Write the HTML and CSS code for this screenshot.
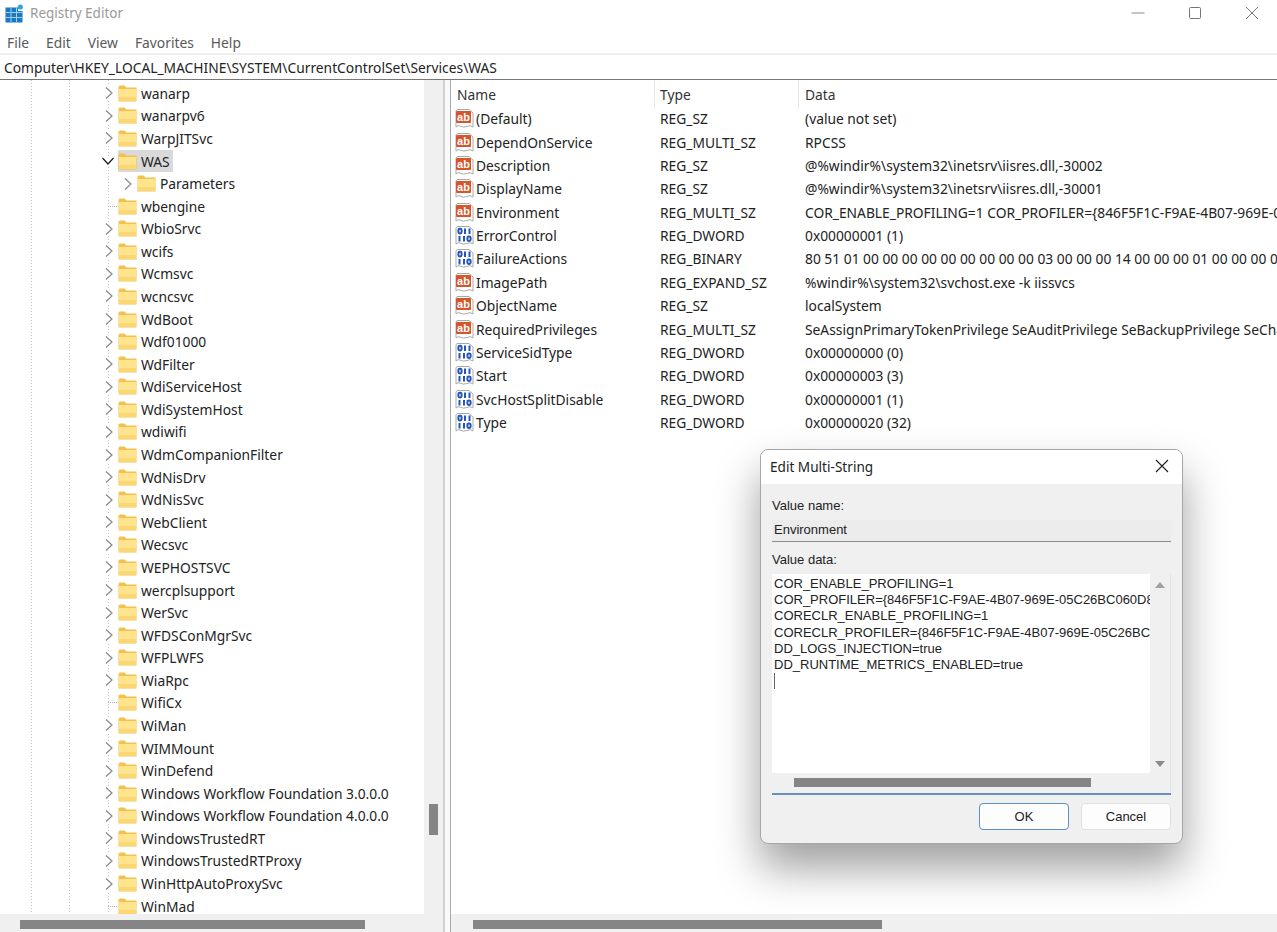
FILE: index.html
```html
<!DOCTYPE html>
<html lang="en">
<head>
    <meta charset="UTF-8">
    <title>Registry Editor</title>
    <link rel="stylesheet" href="styles.css">
</head>
<body>
    <!-- shared icons -->
    <svg class="defs" width="0" height="0">
        <symbol id="folder" viewBox="0 0 19 17">
            <path d="M0.5 2 Q0.5 0.5 2 0.5 H6.5 L8.5 2.5 H18.5 V16.5 H0.5 Z" fill="#f2c14e"/>
            <rect x="1" y="4" width="17" height="12" fill="#fde48d"/>
            <rect x="1" y="12" width="17" height="4" fill="#fbd774"/>
        </symbol>
        <symbol id="chev-right" viewBox="0 0 10 14"><path d="M2 1.5 L8 7 L2 12.5" fill="none" stroke="#888" stroke-width="1.2"/></symbol>
        <symbol id="chev-down" viewBox="0 0 14 10"><path d="M1.5 2 L7 8 L12.5 2" fill="none" stroke="#222" stroke-width="1.3"/></symbol>
        <symbol id="val-str" viewBox="0 0 19 19">
            <path d="M2 0.5 H14 L18 4 V18 Q15 15.5 12 17.5 Q8 19 5 17 Q3 16 1 18 V2 Z" fill="#fff" stroke="#aaa"/>
            <rect x="1" y="2" width="15" height="12" rx="1" fill="#d8552b"/>
            <text x="8.5" y="11.5" class="val-ab">ab</text>
        </symbol>
        <symbol id="val-bin" viewBox="0 0 19 19">
            <path d="M2 0.5 H14 L18 4 V18 Q15 15.5 12 17.5 Q8 19 5 17 Q3 16 1 18 V2 Z" fill="#fff" stroke="#aaa"/>
            <g fill="none" stroke="#2456b8" stroke-width="2">
                <rect x="3.4" y="2.8" width="3.2" height="4.6" rx="1.4"/>
                <path d="M10 2.5 V8 M14.5 2.5 V8 M4.5 10 V15.5 M9 10 V15.5"/>
                <rect x="12.4" y="10.4" width="3.2" height="4.6" rx="1.4"/>
            </g>
        </symbol>
    </svg>

    <div class="window">
        <div class="titlebar">
            <svg class="app-icon" width="19" height="19" viewBox="0 0 19 19">
                <path d="M0.5 3.5 H13 V7 H17.5 V18.5 H0.5 Z" fill="#1b79c4"/>
                <path d="M1 8.5 H17 M1 13.5 H17 M6 4 V18 M11.5 4 V18" stroke="#9fd0f0" stroke-width="1"/>
                <circle cx="15.3" cy="3" r="2.6" fill="#2fa3dc"/>
            </svg>
            <span class="app-title">Registry Editor</span>
            <div class="win-controls">
                <svg width="14" height="14" viewBox="0 0 14 14"><path d="M0.5 7 H13.5" stroke="#8a8a8a"/></svg>
                <svg width="14" height="14" viewBox="0 0 14 14"><rect x="1.5" y="1.5" width="11" height="11" rx="1" fill="none" stroke="#777"/></svg>
                <svg width="14" height="14" viewBox="0 0 14 14"><path d="M1 1 L13 13 M13 1 L1 13" stroke="#777"/></svg>
            </div>
        </div>

        <div class="menubar">
            <span>File</span><span>Edit</span><span>View</span><span>Favorites</span><span>Help</span>
        </div>

        <div class="addressbar">Computer\HKEY_LOCAL_MACHINE\SYSTEM\CurrentControlSet\Services\WAS</div>

        <div class="panes">
            <div class="tree-pane">
                <div class="tree-top">
                    <div class="tree">
                        <div class="tree-row"><svg class="chev"><use href="#chev-right"/></svg><svg class="folder"><use href="#folder"/></svg><span class="tree-label">wanarp</span></div>
                        <div class="tree-row"><svg class="chev"><use href="#chev-right"/></svg><svg class="folder"><use href="#folder"/></svg><span class="tree-label">wanarpv6</span></div>
                        <div class="tree-row"><svg class="chev"><use href="#chev-right"/></svg><svg class="folder"><use href="#folder"/></svg><span class="tree-label">WarpJITSvc</span></div>
                        <div class="tree-row selected"><svg class="chev down"><use href="#chev-down"/></svg><div class="sel-box"><svg class="folder"><use href="#folder"/></svg><span class="tree-label">WAS</span></div></div>
                        <div class="tree-row child"><svg class="chev"><use href="#chev-right"/></svg><svg class="folder"><use href="#folder"/></svg><span class="tree-label">Parameters</span></div>
                        <div class="tree-row"><span class="twig"></span><svg class="folder"><use href="#folder"/></svg><span class="tree-label">wbengine</span></div>
                        <div class="tree-row"><svg class="chev"><use href="#chev-right"/></svg><svg class="folder"><use href="#folder"/></svg><span class="tree-label">WbioSrvc</span></div>
                        <div class="tree-row"><svg class="chev"><use href="#chev-right"/></svg><svg class="folder"><use href="#folder"/></svg><span class="tree-label">wcifs</span></div>
                        <div class="tree-row"><svg class="chev"><use href="#chev-right"/></svg><svg class="folder"><use href="#folder"/></svg><span class="tree-label">Wcmsvc</span></div>
                        <div class="tree-row"><svg class="chev"><use href="#chev-right"/></svg><svg class="folder"><use href="#folder"/></svg><span class="tree-label">wcncsvc</span></div>
                        <div class="tree-row"><svg class="chev"><use href="#chev-right"/></svg><svg class="folder"><use href="#folder"/></svg><span class="tree-label">WdBoot</span></div>
                        <div class="tree-row"><svg class="chev"><use href="#chev-right"/></svg><svg class="folder"><use href="#folder"/></svg><span class="tree-label">Wdf01000</span></div>
                        <div class="tree-row"><svg class="chev"><use href="#chev-right"/></svg><svg class="folder"><use href="#folder"/></svg><span class="tree-label">WdFilter</span></div>
                        <div class="tree-row"><svg class="chev"><use href="#chev-right"/></svg><svg class="folder"><use href="#folder"/></svg><span class="tree-label">WdiServiceHost</span></div>
                        <div class="tree-row"><svg class="chev"><use href="#chev-right"/></svg><svg class="folder"><use href="#folder"/></svg><span class="tree-label">WdiSystemHost</span></div>
                        <div class="tree-row"><svg class="chev"><use href="#chev-right"/></svg><svg class="folder"><use href="#folder"/></svg><span class="tree-label">wdiwifi</span></div>
                        <div class="tree-row"><svg class="chev"><use href="#chev-right"/></svg><svg class="folder"><use href="#folder"/></svg><span class="tree-label">WdmCompanionFilter</span></div>
                        <div class="tree-row"><svg class="chev"><use href="#chev-right"/></svg><svg class="folder"><use href="#folder"/></svg><span class="tree-label">WdNisDrv</span></div>
                        <div class="tree-row"><svg class="chev"><use href="#chev-right"/></svg><svg class="folder"><use href="#folder"/></svg><span class="tree-label">WdNisSvc</span></div>
                        <div class="tree-row"><svg class="chev"><use href="#chev-right"/></svg><svg class="folder"><use href="#folder"/></svg><span class="tree-label">WebClient</span></div>
                        <div class="tree-row"><svg class="chev"><use href="#chev-right"/></svg><svg class="folder"><use href="#folder"/></svg><span class="tree-label">Wecsvc</span></div>
                        <div class="tree-row"><svg class="chev"><use href="#chev-right"/></svg><svg class="folder"><use href="#folder"/></svg><span class="tree-label">WEPHOSTSVC</span></div>
                        <div class="tree-row"><svg class="chev"><use href="#chev-right"/></svg><svg class="folder"><use href="#folder"/></svg><span class="tree-label">wercplsupport</span></div>
                        <div class="tree-row"><svg class="chev"><use href="#chev-right"/></svg><svg class="folder"><use href="#folder"/></svg><span class="tree-label">WerSvc</span></div>
                        <div class="tree-row"><svg class="chev"><use href="#chev-right"/></svg><svg class="folder"><use href="#folder"/></svg><span class="tree-label">WFDSConMgrSvc</span></div>
                        <div class="tree-row"><svg class="chev"><use href="#chev-right"/></svg><svg class="folder"><use href="#folder"/></svg><span class="tree-label">WFPLWFS</span></div>
                        <div class="tree-row"><svg class="chev"><use href="#chev-right"/></svg><svg class="folder"><use href="#folder"/></svg><span class="tree-label">WiaRpc</span></div>
                        <div class="tree-row"><span class="twig"></span><svg class="folder"><use href="#folder"/></svg><span class="tree-label">WifiCx</span></div>
                        <div class="tree-row"><svg class="chev"><use href="#chev-right"/></svg><svg class="folder"><use href="#folder"/></svg><span class="tree-label">WiMan</span></div>
                        <div class="tree-row"><svg class="chev"><use href="#chev-right"/></svg><svg class="folder"><use href="#folder"/></svg><span class="tree-label">WIMMount</span></div>
                        <div class="tree-row"><svg class="chev"><use href="#chev-right"/></svg><svg class="folder"><use href="#folder"/></svg><span class="tree-label">WinDefend</span></div>
                        <div class="tree-row"><svg class="chev"><use href="#chev-right"/></svg><svg class="folder"><use href="#folder"/></svg><span class="tree-label">Windows Workflow Foundation 3.0.0.0</span></div>
                        <div class="tree-row"><svg class="chev"><use href="#chev-right"/></svg><svg class="folder"><use href="#folder"/></svg><span class="tree-label">Windows Workflow Foundation 4.0.0.0</span></div>
                        <div class="tree-row"><svg class="chev"><use href="#chev-right"/></svg><svg class="folder"><use href="#folder"/></svg><span class="tree-label">WindowsTrustedRT</span></div>
                        <div class="tree-row"><svg class="chev"><use href="#chev-right"/></svg><svg class="folder"><use href="#folder"/></svg><span class="tree-label">WindowsTrustedRTProxy</span></div>
                        <div class="tree-row"><svg class="chev"><use href="#chev-right"/></svg><svg class="folder"><use href="#folder"/></svg><span class="tree-label">WinHttpAutoProxySvc</span></div>
                        <div class="tree-row"><span class="twig"></span><svg class="folder"><use href="#folder"/></svg><span class="tree-label">WinMad</span></div>
                    </div>
                    <div class="vscroll"><div class="vscroll-thumb"></div></div>
                </div>
                <div class="hscroll tree-hscroll"><div class="hscroll-thumb"></div></div>
            </div>

            <div class="splitter"></div>

            <div class="list-pane">
                <div class="list-head">
                    <span class="head-name">Name</span>
                    <span class="head-cell">Type</span>
                    <span class="head-cell">Data</span>
                </div>
                <div class="list-body">
                    <div class="list-row"><span class="val-name"><svg class="val-icon"><use href="#val-str"/></svg>(Default)</span><span class="cell">REG_SZ</span><span class="cell">(value not set)</span></div>
                    <div class="list-row"><span class="val-name"><svg class="val-icon"><use href="#val-str"/></svg>DependOnService</span><span class="cell">REG_MULTI_SZ</span><span class="cell">RPCSS</span></div>
                    <div class="list-row"><span class="val-name"><svg class="val-icon"><use href="#val-str"/></svg>Description</span><span class="cell">REG_SZ</span><span class="cell">@%windir%\system32\inetsrv\iisres.dll,-30002</span></div>
                    <div class="list-row"><span class="val-name"><svg class="val-icon"><use href="#val-str"/></svg>DisplayName</span><span class="cell">REG_SZ</span><span class="cell">@%windir%\system32\inetsrv\iisres.dll,-30001</span></div>
                    <div class="list-row"><span class="val-name"><svg class="val-icon"><use href="#val-str"/></svg>Environment</span><span class="cell">REG_MULTI_SZ</span><span class="cell">COR_ENABLE_PROFILING=1 COR_PROFILER={846F5F1C-F9AE-4B07-969E-05C26BC060D8}</span></div>
                    <div class="list-row"><span class="val-name"><svg class="val-icon"><use href="#val-bin"/></svg>ErrorControl</span><span class="cell">REG_DWORD</span><span class="cell">0x00000001 (1)</span></div>
                    <div class="list-row"><span class="val-name"><svg class="val-icon"><use href="#val-bin"/></svg>FailureActions</span><span class="cell">REG_BINARY</span><span class="cell">80 51 01 00 00 00 00 00 00 00 00 00 03 00 00 00 14 00 00 00 01 00 00 00 00 00 00 00</span></div>
                    <div class="list-row"><span class="val-name"><svg class="val-icon"><use href="#val-str"/></svg>ImagePath</span><span class="cell">REG_EXPAND_SZ</span><span class="cell">%windir%\system32\svchost.exe -k iissvcs</span></div>
                    <div class="list-row"><span class="val-name"><svg class="val-icon"><use href="#val-str"/></svg>ObjectName</span><span class="cell">REG_SZ</span><span class="cell">localSystem</span></div>
                    <div class="list-row"><span class="val-name"><svg class="val-icon"><use href="#val-str"/></svg>RequiredPrivileges</span><span class="cell">REG_MULTI_SZ</span><span class="cell">SeAssignPrimaryTokenPrivilege SeAuditPrivilege SeBackupPrivilege SeChangeNotifyPrivilege</span></div>
                    <div class="list-row"><span class="val-name"><svg class="val-icon"><use href="#val-bin"/></svg>ServiceSidType</span><span class="cell">REG_DWORD</span><span class="cell">0x00000000 (0)</span></div>
                    <div class="list-row"><span class="val-name"><svg class="val-icon"><use href="#val-bin"/></svg>Start</span><span class="cell">REG_DWORD</span><span class="cell">0x00000003 (3)</span></div>
                    <div class="list-row"><span class="val-name"><svg class="val-icon"><use href="#val-bin"/></svg>SvcHostSplitDisable</span><span class="cell">REG_DWORD</span><span class="cell">0x00000001 (1)</span></div>
                    <div class="list-row"><span class="val-name"><svg class="val-icon"><use href="#val-bin"/></svg>Type</span><span class="cell">REG_DWORD</span><span class="cell">0x00000020 (32)</span></div>
                </div>
                <div class="hscroll list-hscroll"><div class="hscroll-thumb"></div></div>
            </div>
        </div>
    </div>

    <!-- dialog sits over the window -->
    <div class="dialog">
        <div class="dialog-title">
            <span>Edit Multi-String</span>
            <svg width="14" height="14" viewBox="0 0 14 14"><path d="M1 1 L13 13 M13 1 L1 13" stroke="#222" stroke-width="1.2"/></svg>
        </div>
        <div class="dialog-body">
            <div class="field-label">Value name:</div>
            <div class="name-input">Environment</div>
            <div class="field-label data-label">Value data:</div>
            <div class="data-box">
                <div class="data-top">
                    <div class="data-text">
                        <div>COR_ENABLE_PROFILING=1</div>
                        <div>COR_PROFILER={846F5F1C-F9AE-4B07-969E-05C26BC060D8}</div>
                        <div>CORECLR_ENABLE_PROFILING=1</div>
                        <div>CORECLR_PROFILER={846F5F1C-F9AE-4B07-969E-05C26BC060D8}</div>
                        <div>DD_LOGS_INJECTION=true</div>
                        <div>DD_RUNTIME_METRICS_ENABLED=true</div>
                        <div class="caret"></div>
                    </div>
                    <div class="data-vscroll">
                        <span class="arrow-up"></span>
                        <span class="arrow-down"></span>
                    </div>
                </div>
                <div class="data-hscroll"><div class="data-hthumb"></div></div>
            </div>
            <div class="dialog-buttons">
                <button class="btn btn-default">OK</button>
                <button class="btn">Cancel</button>
            </div>
        </div>
    </div>
</body>
</html>
```

FILE: styles.css
```css
/* page */
* {
    box-sizing: border-box;
}

body {
    margin: 0;
    height: 100vh;
    overflow: hidden;
    background-color: #fff;
    color: #222;
    font-family: "Noto Sans", "Open Sans", sans-serif;
    font-size: 13.8px;
}

.defs {
    position: absolute;
}

.window {
    display: flex;
    flex-direction: column;
    height: 100vh;
}

/* title bar */
.titlebar {
    display: flex;
    align-items: center;
    height: 28px;
    padding: 0 18px 2px 5px;
}

.app-icon {
    margin-right: 6px;
}

.app-title {
    color: #9a9a9a;
    font-size: 13.5px;
}

.win-controls {
    display: flex;
    gap: 43px;
    margin-left: auto;
}

/* menu */
.menubar {
    display: flex;
    gap: 17px;
    align-items: center;
    height: 27px;
    padding: 3px 0 0 7px;
    color: #5a5a5a;
    border-bottom: 2px solid #efefef;
}

.addressbar {
    height: 25px;
    padding-left: 4px;
    line-height: 26px;
    color: #222;
    white-space: nowrap;
    border-bottom: 1px solid #777;
}

/* panes */
.panes {
    flex: 1;
    display: flex;
    min-height: 0;
}

.tree-pane {
    display: flex;
    flex-direction: column;
    width: 443px;
}

.tree-top {
    flex: 1;
    display: flex;
    min-height: 0;
}

.tree {
    flex: 1;
    overflow: hidden;
    padding-top: 2px;
    background-image:
        repeating-linear-gradient(to bottom, #c4c4c4 0 1px, transparent 1px 3px),
        repeating-linear-gradient(to bottom, #c4c4c4 0 1px, transparent 1px 3px),
        repeating-linear-gradient(to bottom, #c4c4c4 0 1px, transparent 1px 3px);
    background-size: 1px 100%;
    background-repeat: no-repeat;
    background-position: 31px 0, 69px 0, 108px 0;
}

.tree-row {
    display: flex;
    align-items: center;
    height: 22.58px;
    padding-left: 104px;
    white-space: nowrap;
}

.tree-row.child {
    padding-left: 123px;
}

.chev {
    width: 10px;
    height: 14px;
    margin-right: 4px;
    background-color: #fff;
}

.chev.down {
    width: 14px;
    height: 10px;
    margin-left: -3px;
    margin-right: 3px;
}

.twig {
    width: 9px;
    height: 1px;
    margin-left: 4px;
    margin-right: 1px;
    background-image: repeating-linear-gradient(to right, #b0b0b0 0 1px, transparent 1px 2px);
}

.folder {
    width: 19px;
    height: 17px;
    flex-shrink: 0;
}

.tree-label {
    margin-left: 4px;
    color: #222;
}

.sel-box {
    display: flex;
    align-items: center;
    height: 22px;
    padding-right: 3px;
    background-color: #d9d9d9;
}

/* scrollbars */
.vscroll {
    position: relative;
    width: 19px;
    background-color: #f0f0f0;
}

.vscroll-thumb {
    position: absolute;
    top: 724px;
    left: 5px;
    width: 9px;
    height: 31px;
    background-color: #858585;
}

.hscroll {
    height: 18px;
    flex-shrink: 0;
    padding-top: 6px;
    background-color: #f0f0f0;
}

.hscroll-thumb {
    height: 9px;
    background-color: #858585;
}

.tree-hscroll {
    padding-left: 20px;
    padding-right: 78px;
}

.list-hscroll {
    padding-left: 22px;
    padding-right: 395px;
}

.splitter {
    width: 8px;
    border-left: 2px solid #d0d0d0;
    border-right: 1px solid #a8a8a8;
    background-color: #fafafa;
}

/* value list */
.list-pane {
    flex: 1;
    display: flex;
    flex-direction: column;
    min-width: 0;
    overflow: hidden;
}

.list-head {
    display: grid;
    grid-template-columns: 205px 145px 1fr;
    height: 27px;
    line-height: 29px;
    color: #333;
}

.head-name {
    padding-left: 6px;
    border-right: 1px solid #e8e8e8;
    margin-right: 1px;
}

.head-cell {
    padding-left: 4px;
}

.head-cell:nth-child(2) {
    border-right: 1px solid #e8e8e8;
    margin-right: 2px;
}

.list-body {
    flex: 1;
    min-height: 0;
    overflow: hidden;
}

.list-row {
    display: grid;
    grid-template-columns: 205px 145px 1fr;
    align-items: center;
    height: 23.38px;
    white-space: nowrap;
}

.val-name {
    display: flex;
    align-items: center;
    padding-left: 4px;
}

.val-icon {
    width: 19px;
    height: 19px;
    margin-right: 2px;
}

.val-ab {
    fill: #fff;
    font-family: "Liberation Sans", sans-serif;
    font-size: 11px;
    font-weight: bold;
    text-anchor: middle;
}

.cell {
    padding-left: 4px;
}

/* edit dialog */
.dialog {
    position: absolute;
    left: 760px;
    top: 449px;
    display: flex;
    flex-direction: column;
    width: 423px;
    height: 395px;
    border: 1px solid #a6a6a6;
    border-radius: 8px;
    overflow: hidden;
    background-color: #f0f0f0;
    box-shadow: 0 24px 44px rgba(0, 0, 0, 0.38);
}

.dialog-title {
    display: flex;
    align-items: center;
    justify-content: space-between;
    height: 34px;
    padding: 0 13px 2px 9px;
    background-color: #fff;
    font-size: 13.6px;
}

.dialog-body {
    flex: 1;
    padding: 14px 11px 0 11px;
    font-family: "Liberation Sans", sans-serif;
    font-size: 13px;
    color: #222;
}

.field-label {
    height: 15px;
    line-height: 15px;
}

.data-label {
    margin-top: 10px;
}

.name-input {
    height: 22px;
    margin-top: 7px;
    padding-left: 2px;
    line-height: 19px;
    background-color: #ececec;
    border-bottom: 1px solid #8c8c8c;
}

.data-box {
    height: 221px;
    margin-top: 7px;
    display: flex;
    flex-direction: column;
    border-bottom: 2px solid #6c8ebf;
    background-color: #f0f0f0;
}

.data-top {
    flex: 1;
    display: flex;
    min-height: 0;
}

.data-text {
    flex: 1;
    min-width: 0;
    overflow: hidden;
    padding: 2px 0 0 2px;
    line-height: 16.2px;
    white-space: nowrap;
    background-color: #fff;
}

.caret {
    width: 1px;
    height: 16px;
    background-color: #666;
}

.data-vscroll {
    display: flex;
    flex-direction: column;
    align-items: center;
    justify-content: space-between;
    width: 21px;
    padding: 8px 0 6px;
    border-right: 1px solid #e4e4e4;
}

.arrow-up {
    border-left: 5px solid transparent;
    border-right: 5px solid transparent;
    border-bottom: 6px solid #a0a0a0;
}

.arrow-down {
    border-left: 5px solid transparent;
    border-right: 5px solid transparent;
    border-top: 6px solid #8a8a8a;
}

.data-hscroll {
    height: 20px;
    padding: 5px 79px 0 22px;
    border-right: 1px solid #e4e4e4;
}

.data-hthumb {
    height: 9px;
    background-color: #858585;
}

.dialog-buttons {
    display: flex;
    justify-content: flex-end;
    gap: 12px;
    margin-top: 8px;
}

.btn {
    width: 90px;
    height: 27px;
    padding: 0;
    background-color: #fdfdfd;
    border: 1px solid #e0e0e0;
    border-radius: 4px;
    color: #222;
    font-family: "Liberation Sans", sans-serif;
    font-size: 13px;
}

.btn-default {
    border-color: #5b8fd0;
}
```
